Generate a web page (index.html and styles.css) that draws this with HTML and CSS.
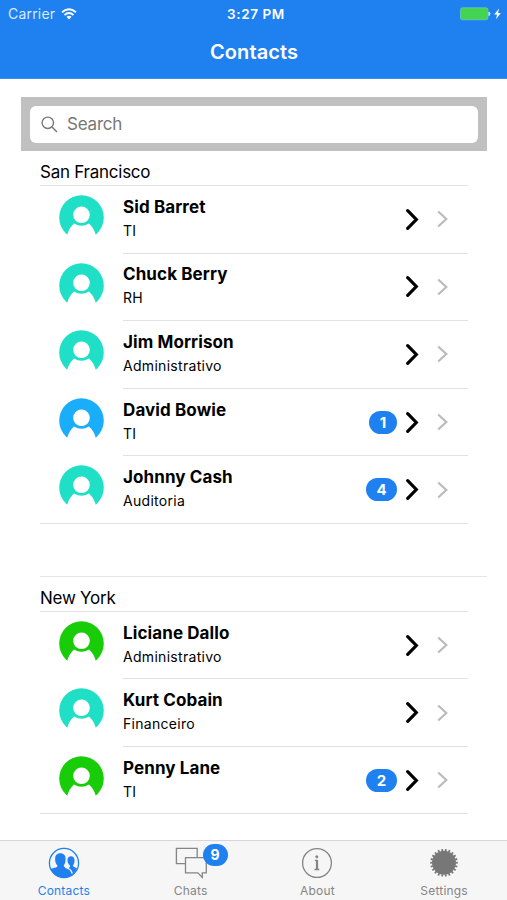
FILE: index.html
```html
<!DOCTYPE html>
<html lang="en">
<head>
    <meta charset="UTF-8">
    <title>Contacts</title>
    <link rel="stylesheet" href="styles.css">
</head>
<body>
<!-- shared icons -->
<svg class="defs">
    <symbol id="avatar" viewBox="0 0 45 45">
        <circle cx="22.5" cy="22.5" r="22.3" fill="currentColor"/>
        <circle cx="22.5" cy="19.8" r="8.3" fill="#fff"/>
        <path d="M8.300 39.600C9.500 35 12 31 15 28.500Q22.500 33 30 28.500C33 31 35.500 35 36.700 39.600V45H8.300Z" fill="#fff"/>
    </symbol>
    <symbol id="arrow" viewBox="0 0 13 21">
        <path d="M1.700 1.700L10.300 10.500L1.700 19.300" fill="none" stroke="currentColor" stroke-width="3.200" stroke-linecap="round"/>
    </symbol>
    <symbol id="chevron" viewBox="0 0 12 18">
        <path d="M1.200 1.500L9.300 9L1.200 16.500" fill="none" stroke="currentColor" stroke-width="2.200"/>
    </symbol>
</svg>
<div class="page">
    <header class="header">
        <div class="status">
            <div class="carrier">
                <span>Carrier</span>
                <svg class="wifi" viewBox="0 0 16 12">
                    <path d="M1 4.300Q8 -1.800 15 4.300M3.500 7Q8 3.100 12.500 7" fill="none" stroke="#fff" stroke-width="1.800"/>
                    <path d="M5.500 8.800Q8 6.700 10.500 8.800L8 11.500Z" fill="#fff"/>
                </svg>
            </div>
            <div class="time">3:27 PM</div>
            <div class="power">
                <svg viewBox="0 0 41 14">
                    <rect x="0.500" y="0.800" width="27.500" height="12" rx="1.800" fill="#43d551" stroke="#6cc5b8" stroke-width="0.800"/>
                    <path d="M29 5Q31 6.800 29 8.600Z" fill="#d5eaff" stroke="#d5eaff"/>
                    <path d="M39 1.500L34.200 7.500H37L36 12.300L40.800 6H38Z" fill="#fff"/>
                </svg>
            </div>
        </div>
        <h1 class="title">Contacts</h1>
    </header>
    <main class="content">
        <div class="search">
            <label class="search-box">
                <svg viewBox="0 0 17 17"><circle cx="6.800" cy="6.800" r="5.700"/><path d="M11 11L16 16"/></svg>
                <input type="text" placeholder="Search">
            </label>
        </div>
        <section class="group">
            <h2 class="group-title">San Francisco</h2>
            <ul class="list">
                <li class="item">
                    <svg class="avatar teal"><use href="#avatar"/></svg>
                    <div class="inner">
                        <div class="info"><h3>Sid Barret</h3><p>TI</p></div>
                        <svg class="arrow"><use href="#arrow"/></svg>
                        <svg class="chevron"><use href="#chevron"/></svg>
                    </div>
                </li>
                <li class="item">
                    <svg class="avatar teal"><use href="#avatar"/></svg>
                    <div class="inner">
                        <div class="info"><h3>Chuck Berry</h3><p>RH</p></div>
                        <svg class="arrow"><use href="#arrow"/></svg>
                        <svg class="chevron"><use href="#chevron"/></svg>
                    </div>
                </li>
                <li class="item">
                    <svg class="avatar teal"><use href="#avatar"/></svg>
                    <div class="inner">
                        <div class="info"><h3>Jim Morrison</h3><p>Administrativo</p></div>
                        <svg class="arrow"><use href="#arrow"/></svg>
                        <svg class="chevron"><use href="#chevron"/></svg>
                    </div>
                </li>
                <li class="item">
                    <svg class="avatar blue"><use href="#avatar"/></svg>
                    <div class="inner">
                        <div class="info"><h3>David Bowie</h3><p>TI</p></div>
                        <span class="badge narrow">1</span>
                        <svg class="arrow"><use href="#arrow"/></svg>
                        <svg class="chevron"><use href="#chevron"/></svg>
                    </div>
                </li>
                <li class="item">
                    <svg class="avatar teal"><use href="#avatar"/></svg>
                    <div class="inner">
                        <div class="info"><h3>Johnny Cash</h3><p>Auditoria</p></div>
                        <span class="badge">4</span>
                        <svg class="arrow"><use href="#arrow"/></svg>
                        <svg class="chevron"><use href="#chevron"/></svg>
                    </div>
                </li>
            </ul>
        </section>
        <section class="group next">
            <h2 class="group-title">New York</h2>
            <ul class="list">
                <li class="item">
                    <svg class="avatar green"><use href="#avatar"/></svg>
                    <div class="inner">
                        <div class="info"><h3>Liciane Dallo</h3><p>Administrativo</p></div>
                        <svg class="arrow"><use href="#arrow"/></svg>
                        <svg class="chevron"><use href="#chevron"/></svg>
                    </div>
                </li>
                <li class="item">
                    <svg class="avatar teal"><use href="#avatar"/></svg>
                    <div class="inner">
                        <div class="info"><h3>Kurt Cobain</h3><p>Financeiro</p></div>
                        <svg class="arrow"><use href="#arrow"/></svg>
                        <svg class="chevron"><use href="#chevron"/></svg>
                    </div>
                </li>
                <li class="item">
                    <svg class="avatar green"><use href="#avatar"/></svg>
                    <div class="inner">
                        <div class="info"><h3>Penny Lane</h3><p>TI</p></div>
                        <span class="badge">2</span>
                        <svg class="arrow"><use href="#arrow"/></svg>
                        <svg class="chevron"><use href="#chevron"/></svg>
                    </div>
                </li>
            </ul>
        </section>
    </main>
    <nav class="tabs">
        <a class="tab active">
            <svg viewBox="0 0 32 32">
                <circle cx="16" cy="16" r="14.600" fill="none" stroke="currentColor" stroke-width="1.300"/>
                <path d="M19 24C20 20 22.500 21 22 18.500C20 17 19.300 14.500 19.500 12.500C19.700 8 26.300 8 26.500 12.500C26.700 15 26 17 25 18.500C25 20.500 28.500 20 29 22C26 27.500 22 30 16 30.500Z" fill="currentColor"/>
                <path d="M2.800 22C5 20.500 9.500 21 9.500 18.700C7.500 16.500 6.900 14 7.200 11C7.400 4.700 17.300 4.700 17.500 11C17.700 14 17.200 16.500 15.700 18.500C15.900 21.500 22.500 20.500 23.300 27.500C16 32.500 6.500 31 2.800 22Z" fill="currentColor"/>
                <path d="M17.300 20.300C21.500 21.300 23.500 23 24.200 26.500" fill="none" stroke="#f6f6f7" stroke-width="1.300"/>
            </svg>
            <span>Contacts</span>
        </a>
        <a class="tab">
            <svg viewBox="0 0 32 32">
                <path d="M10.500 16.600H1.400V1.400H22.200V10.500M10.500 10.600H31.300V25.900H27.300V30.400L22.800 25.900H10.500Z" fill="none" stroke="currentColor" stroke-width="1.300"/>
            </svg>
            <em class="badge">9</em>
            <span>Chats</span>
        </a>
        <a class="tab">
            <svg viewBox="0 0 32 32">
                <circle cx="16" cy="16" r="14.400" fill="none" stroke="currentColor" stroke-width="1.300"/>
                <circle cx="15.800" cy="9.700" r="1.500" fill="currentColor"/>
                <path d="M13.800 13.400H16V22.400M13.500 22.500H18.300" fill="none" stroke="currentColor" stroke-width="1.300"/>
                <path d="M16 13V22.500" stroke="currentColor" stroke-width="2.200"/>
            </svg>
            <span>About</span>
        </a>
        <a class="tab">
            <svg viewBox="0 0 32 32">
                <circle cx="16" cy="15.800" r="12" fill="#777"/>
                <circle cx="16" cy="15.800" r="12.700" fill="none" stroke="#777" stroke-width="2.200" pathLength="88" stroke-dasharray="2 2" stroke-dashoffset="1"/>
            </svg>
            <span>Settings</span>
        </a>
    </nav>
</div>
</body>
</html>
```
FILE: styles.css
```css
* {
    margin: 0;
    padding: 0;
    box-sizing: border-box;
}
body {
    background-color: #fff;
    color: #000;
    font-family: Inter, "Liberation Sans", sans-serif;
}
ul {
    list-style: none;
}
svg {
    display: block;
    flex: none;
}
.defs {
    display: none;
}
.page {
    display: flex;
    flex-direction: column;
    height: 900px;
    overflow: hidden;
}
/* header */
.header {
    height: 79px;
    flex: none;
    background-color: #1f80f0;
    border-bottom: 1px solid #3990f2;
    color: #fff;
}
.status {
    display: grid;
    grid-template-columns: 1fr auto 1fr;
    align-items: center;
    height: 27px;
    padding: 0 6px 0 8px;
    font-size: 14px;
}
.carrier {
    display: flex;
    align-items: center;
    gap: 6px;
    color: #d9eaff;
    letter-spacing: 0.2px;
}
.wifi {
    width: 16px;
    height: 12px;
}
.time {
    padding-left: 3px;
    font-weight: 600;
    font-size: 13.5px;
    letter-spacing: 0.6px;
}
.power svg {
    width: 41px;
    height: 14px;
    margin-left: auto;
}
.title {
    padding-left: 1px;
    line-height: 50px;
    text-align: center;
    font-size: 20px;
    font-weight: 600;
    letter-spacing: 0.1px;
}
/* search */
.content {
    flex: 1;
    padding: 18px 20px 0 21px;
}
.search {
    height: 54px;
    padding: 9px;
    background-color: #c0c0c0;
}
.search-box {
    display: flex;
    align-items: center;
    gap: 9px;
    height: 36.5px;
    padding-left: 11px;
    border-radius: 6px;
    background-color: #fff;
}
.search-box svg {
    width: 17px;
    height: 17px;
    fill: none;
    stroke: #777;
    stroke-width: 1.4;
}
.search-box input {
    width: 300px;
    border: 0;
    outline: none;
    font: 17px Inter, sans-serif;
    letter-spacing: -0.2px;
}
.search-box input::placeholder {
    color: #777;
}
/* list */
.group {
    padding-left: 19px;
}
.group-title {
    height: 34px;
    line-height: 43px;
    font-size: 17px;
    font-weight: 400;
    letter-spacing: -0.25px;
}
.next {
    padding-left: 0;
    margin: 52px 0 0 19px;
    border-top: 1px solid #e5e5e5;
}
.list {
    margin-right: 19px;
    border-top: 1px solid #e2e2e2;
}
.item {
    display: flex;
    height: 67.6px;
    padding-left: 19px;
}
.next .item {
    height: 67.5px;
}
.item:last-child {
    border-bottom: 1px solid #e2e2e2;
}
.avatar {
    width: 45px;
    height: 45px;
    margin: 9px 19px 0 0;
}
.teal {
    color: #1fdfc6;
}
.blue {
    color: #19adfa;
}
.green {
    color: #18cc08;
}
.inner {
    display: flex;
    align-items: center;
    flex: 1;
    padding-right: 19px;
    border-bottom: 1px solid #e2e2e2;
}
.item:last-child .inner {
    border-bottom: 0;
}
.info {
    flex: 1;
    padding-bottom: 1px;
}
.info h3 {
    font-size: 17px;
    font-weight: 700;
    line-height: 24px;
    letter-spacing: 0.1px;
}
.info p {
    font-size: 14px;
    line-height: 24px;
    letter-spacing: 0.3px;
}
.badge {
    width: 31px;
    height: 23px;
    margin-right: 9px;
    border-radius: 12px;
    background-color: #1f80f0;
    color: #fff;
    text-align: center;
    line-height: 23px;
    font-size: 15px;
    font-style: normal;
    font-weight: 700;
}
.badge.narrow {
    width: 28px;
}
.arrow {
    width: 13px;
    height: 21px;
    margin-right: 18px;
}
.chevron {
    width: 12px;
    height: 18px;
    color: #bbb;
}
/* tab bar */
.tabs {
    display: flex;
    flex: none;
    height: 60px;
    border-top: 1px solid #d6d6d6;
    background-color: #f6f6f7;
}
.tab {
    display: flex;
    flex: 1;
    flex-direction: column;
    align-items: center;
    position: relative;
    padding: 6px 0 0 1px;
    color: #858585;
    font-size: 12px;
    letter-spacing: 0.2px;
}
.tab svg {
    width: 32px;
    height: 32px;
}
.tab span {
    margin-top: 4px;
    line-height: 16px;
}
.tab.active {
    color: #1f80f0;
}
.tab .badge {
    position: absolute;
    top: 3px;
    left: 76px;
    width: 25px;
    height: 22px;
    margin: 0;
    line-height: 22px;
    font-size: 14px;
}
```
